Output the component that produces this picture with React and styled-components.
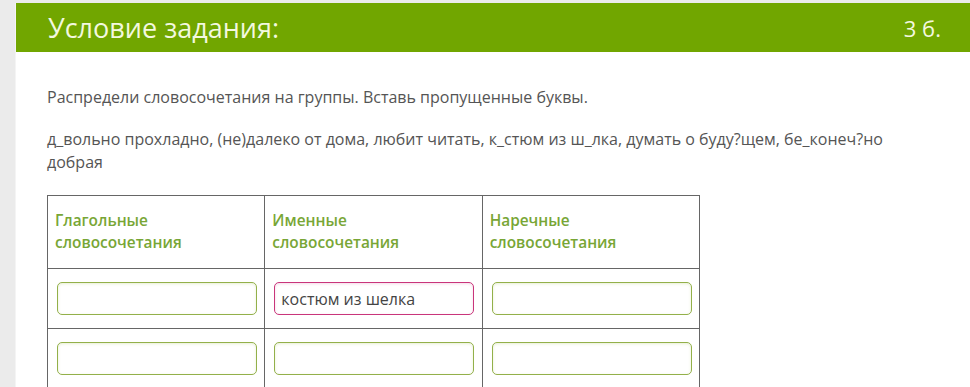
import styled, { createGlobalStyle } from "styled-components";

const GlobalStyle = createGlobalStyle`
  html, body {
    margin: 0;
    padding: 0;
    background: #ebebeb;
    font-family: "Open Sans", "Noto Sans", sans-serif;
  }
  body {
    padding: 3px 0 0 15px;
    overflow: hidden;
  }
`;

const columns = [
  { title: "Глагольные словосочетания", values: ["", ""] },
  { title: "Именные словосочетания", values: ["костюм из шелка", ""] },
  { title: "Наречные словосочетания", values: ["", ""] },
];

function App() {
  return (
    <>
      <GlobalStyle />
      <Card>
        <Header>
          <Title>Условие задания:</Title>
          <Score>3 б.</Score>
        </Header>
        <Body>
          <Text>Распредели словосочетания на группы. Вставь пропущенные буквы.</Text>
          <Text>
            д_вольно прохладно, (не)далеко от дома, любит читать, к_стюм из ш_лка, думать о
            буду?щем, бе_конеч?но добрая
          </Text>
          <Table>
            <thead>
              <tr>
                {columns.map((c) => (
                  <Th key={c.title}>{c.title}</Th>
                ))}
              </tr>
            </thead>
            <tbody>
              {[0, 1].map((row) => (
                <tr key={row}>
                  {columns.map((c) => (
                    <Td key={c.title}>
                      <Field
                        $wrong={c.values[row] !== ""}
                        defaultValue={c.values[row]}
                      />
                    </Td>
                  ))}
                </tr>
              ))}
            </tbody>
          </Table>
        </Body>
      </Card>
    </>
  );
}

const Card = styled.div`
  background: #fff;
  border-left: 1px solid #f4f4f4;
  min-height: 400px;
`;

const Header = styled.div`
  height: 49px;
  background: #71a600;
  display: flex;
  align-items: center;
  justify-content: space-between;
  padding: 0 29px 0 32px;
  color: #f3f8df;
`;

const Title = styled.h1`
  margin: 0;
  font-size: 27px;
  font-weight: 400;
`;

const Score = styled.span`
  font-size: 22px;
`;

const Body = styled.div`
  padding: 34px 32px 0 31px;
`;

const Text = styled.p`
  margin: 0 0 19px;
  font-size: 16px;
  line-height: 23px;
  color: #555;
`;

const Table = styled.table`
  margin-top: 21px;
  border-collapse: collapse;
  table-layout: fixed;
  width: 653px;
`;

const Th = styled.th`
  box-sizing: border-box;
  width: 217px;
  height: 73px;
  border: 1px solid #666;
  padding: 0 30px 0 7px;
  text-align: left;
  vertical-align: middle;
  font-size: 15.4px;
  line-height: 22px;
  font-weight: 600;
  color: #78a636;
`;

const Td = styled.td`
  border: 1px solid #666;
  padding: 13px 9px;
  height: 33px;
`;

const Field = styled.input`
  display: block;
  box-sizing: border-box;
  width: 200px;
  height: 33px;
  border: 1px solid ${(p) => (p.$wrong ? "#c9357b" : "#93b04a")};
  border-radius: 5px;
  box-shadow: inset 0 1px 3px
    ${(p) => (p.$wrong ? "rgba(200, 50, 120, 0.18)" : "rgba(150, 180, 60, 0.22)")};
  padding: 0 6px;
  font-family: "Open Sans", "Noto Sans", sans-serif;
  font-size: 16px;
  color: #444;
  background: #fff;
  outline: none;
`;

export default App;
